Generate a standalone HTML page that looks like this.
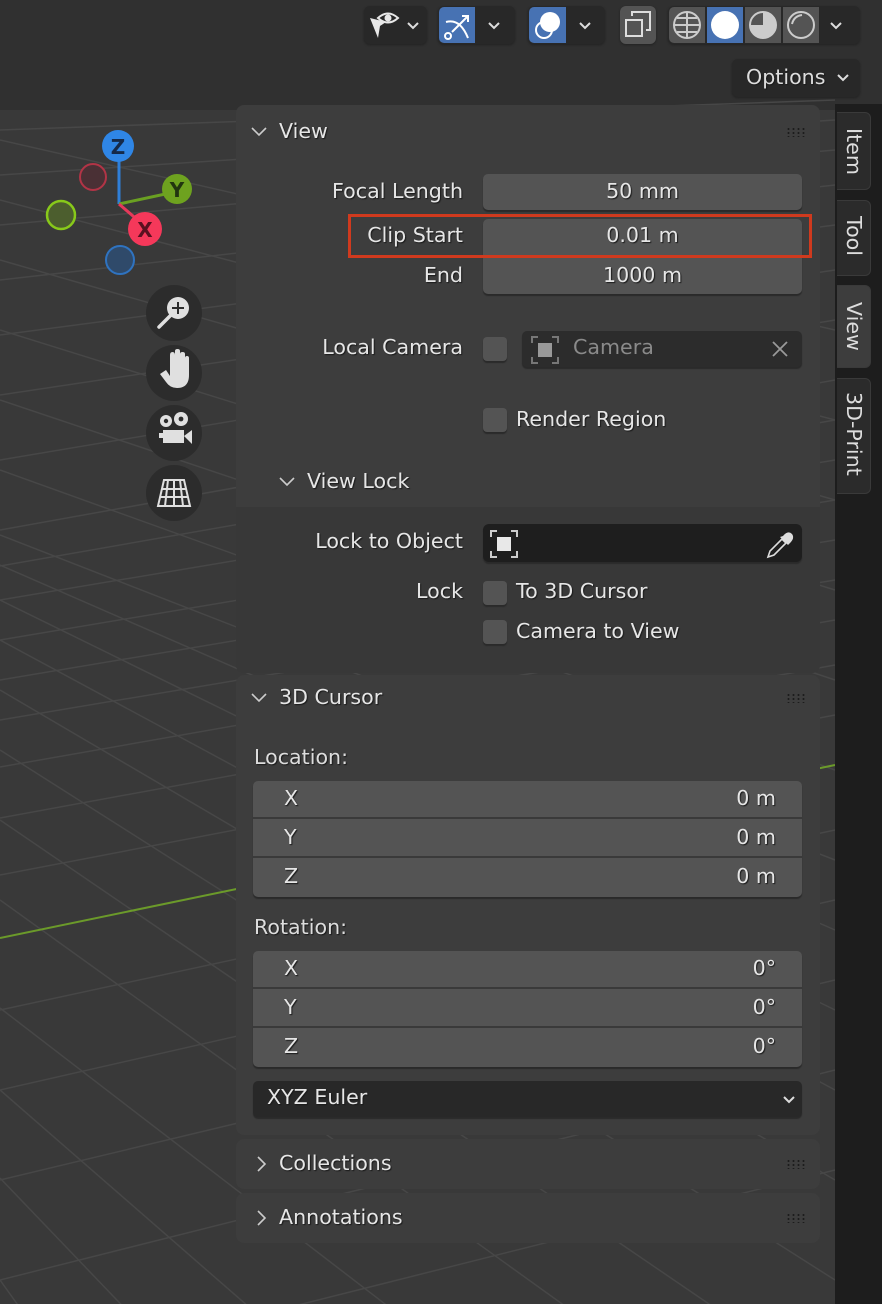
<!DOCTYPE html>
<html><head><meta charset="utf-8"><style>
*{box-sizing:border-box;margin:0;padding:0}
html,body{width:882px;height:1304px;overflow:hidden}
body{background:#393939;font-family:"Liberation Sans","DejaVu Sans",sans-serif;color:#e6e6e6;position:relative}
.a{position:absolute}
.t{text-shadow:1px 1px 1px #1a1a1a;white-space:nowrap;font-family:"DejaVu Sans","Liberation Sans",sans-serif;font-size:20.6px}
.r{text-align:right}
.fld{position:absolute;background:#545454;border-radius:5px;box-shadow:0 2px 1px #2a2a2a}
.cb{position:absolute;width:24px;height:24px;background:#545454;border-radius:4px;box-shadow:0 2px 1px #2a2a2a}
.panel{position:absolute;left:236px;width:584px;background:#3d3d3d;border-radius:8px}
.dots{position:absolute;width:20px;height:10px;background-image:radial-gradient(#1c1c1c 1px,transparent 1.3px);background-size:5px 4px}
.tab{position:absolute;left:837px;width:34px;background:#2b2b2b;border-radius:0 6px 6px 0;border:1px solid #3a3a3a;border-left:none}
.vt{position:absolute;writing-mode:vertical-rl;font-family:"DejaVu Sans",sans-serif;font-size:20.6px;color:#ddd}
.hb{position:absolute;background:#282828;border-radius:6px;box-shadow:0 1px 2px #222}
</style></head><body>
<svg class="a" style="left:0;top:0" width="882" height="1304">
<rect width="882" height="110" fill="#303030"/>
<g stroke="#474747" stroke-width="1.5" fill="none">
<line x1="0" y1="130" x2="835" y2="100"/>
<line x1="0" y1="175" x2="835" y2="120"/>
<line x1="0" y1="225" x2="835" y2="150"/>
<line x1="0" y1="280" x2="835" y2="185"/>
<line x1="0" y1="335" x2="835" y2="225"/>
<line x1="0" y1="395" x2="835" y2="270"/>
<line x1="0" y1="460" x2="835" y2="320"/>
<line x1="0" y1="530" x2="835" y2="380"/>
<line x1="0" y1="566" x2="835" y2="420"/>
<line x1="0" y1="600" x2="835" y2="460"/>
<line x1="0" y1="640" x2="835" y2="500"/>
<line x1="0" y1="680" x2="835" y2="540"/>
<line x1="0" y1="720" x2="835" y2="580"/>
<line x1="0" y1="767" x2="835" y2="620"/>
<line x1="0" y1="818" x2="835" y2="665"/>
<line x1="0" y1="875" x2="835" y2="715"/>
<line x1="0" y1="1010" x2="835" y2="830"/>
<line x1="0" y1="1090" x2="835" y2="900"/>
<line x1="0" y1="1180" x2="835" y2="980"/>
<line x1="0" y1="1280" x2="835" y2="1070"/>
<line x1="0" y1="1380" x2="835" y2="1170"/>
<line x1="0" y1="140" x2="835" y2="330"/>
<line x1="0" y1="200" x2="835" y2="420"/>
<line x1="0" y1="260" x2="835" y2="500"/>
<line x1="0" y1="330" x2="835" y2="590"/>
<line x1="0" y1="400" x2="835" y2="680"/>
<line x1="0" y1="470" x2="835" y2="770"/>
<line x1="0" y1="535" x2="835" y2="860"/>
<line x1="0" y1="565" x2="835" y2="930"/>
<line x1="0" y1="600" x2="835" y2="1010"/>
<line x1="0" y1="640" x2="835" y2="1090"/>
<line x1="0" y1="690" x2="835" y2="1180"/>
<line x1="0" y1="750" x2="835" y2="1280"/>
<line x1="0" y1="820" x2="835" y2="1390"/>
<line x1="0" y1="900" x2="835" y2="1500"/>
<line x1="0" y1="1008" x2="835" y2="1650"/>
<line x1="0" y1="1090" x2="700" y2="1700"/>
<line x1="0" y1="1178" x2="500" y2="1700"/>
<line x1="0" y1="1280" x2="300" y2="1700"/>
</g>
<line x1="0" y1="938" x2="835" y2="765" stroke="#6b9a2a" stroke-width="2"/>
<line x1="119" y1="204" x2="119" y2="160" stroke="#2f7fd8" stroke-width="3"/>
<line x1="119" y1="204" x2="170" y2="193" stroke="#6aa022" stroke-width="3"/>
<line x1="119" y1="204" x2="140" y2="222" stroke="#e6395a" stroke-width="3"/>
<circle cx="93" cy="177" r="13" fill="#4a3035" stroke="#b23446" stroke-width="2"/>
<circle cx="61" cy="215" r="14" fill="#4c5e2e" stroke="#88c91a" stroke-width="2.5"/>
<circle cx="120" cy="260" r="14" fill="#2f4a6a" stroke="#2f73c0" stroke-width="2"/>
<circle cx="118" cy="146" r="16" fill="#2f86e6"/>
<text x="118" y="154" text-anchor="middle" font-family="DejaVu Sans" font-weight="bold" font-size="20" fill="#152a4a">Z</text>
<circle cx="177" cy="189" r="15" fill="#6ea21f"/>
<text x="177" y="197" text-anchor="middle" font-family="DejaVu Sans" font-weight="bold" font-size="20" fill="#223510">Y</text>
<circle cx="145" cy="229" r="17" fill="#f5385a"/>
<text x="145" y="237" text-anchor="middle" font-family="DejaVu Sans" font-weight="bold" font-size="20" fill="#5a1020">X</text>
<g fill="#2c2c2c"><circle cx="174" cy="313" r="28"/><circle cx="174" cy="373" r="28"/><circle cx="174" cy="433" r="28"/><circle cx="174" cy="493" r="28"/></g>
<g fill="#e0e0e0" stroke="#e0e0e0">
<circle cx="178" cy="308" r="11" stroke="none"/><line x1="170" y1="316" x2="159" y2="327" stroke-width="3.5" stroke-linecap="round"/>
<path d="M178 302v12M172 308h12" stroke="#2c2c2c" stroke-width="2" fill="none"/>
<path d="M160 374 L166 370 L170 376 L170 355 Q170 352 172.5 352 Q175 352 175 355 L175 351 Q175 349 177.5 349 Q180 349 180 351 L180 354 Q180 352 182.5 352 Q185 352 185 354 L185 358 Q185 356 187 356 Q189 356 189 358 L189 375 Q189 388 177 388 Q170 388 166 382 Z" stroke="none"/>
<circle cx="166" cy="421" r="6" stroke="none"/><circle cx="181" cy="419" r="7" stroke="none"/>
<circle cx="166" cy="421" r="2.2" fill="#2c2c2c" stroke="none"/><circle cx="181" cy="419" r="2.4" fill="#2c2c2c" stroke="none"/>
<rect x="163" y="430" width="21" height="13" stroke="none"/><rect x="159" y="433" width="5" height="5" stroke="none"/><path d="M184 436 L192 430 L192 444 Z" stroke="none"/>
<path d="M164 480 H184 L190 506 H158 Z M168 480 L165 506 M174 480 V506 M180 480 L183 506 M162 489 H186 M160 497 H188" fill="none" stroke-width="2"/>
</g>
</svg>

<div class="hb" style="left:364px;top:6px;width:63px;height:38px"></div>
<svg class="a" style="left:364px;top:6px" width="63" height="38"><path d="M6 12 L22 16 L16 20 L14 32 Z" fill="#e8e8e8"/><path d="M14 12 Q24 3 34 12 Q24 21 14 12Z" fill="none" stroke="#e8e8e8" stroke-width="2"/><circle cx="24" cy="12" r="3.5" fill="#e8e8e8"/><path d="M44 17 l5 5 l5 -5" stroke="#ddd" stroke-width="2" fill="none"/></svg>
<div class="hb" style="left:438px;top:6px;width:77px;height:38px"></div>
<div class="a" style="left:439px;top:7px;width:36px;height:36px;background:#4772b3;border-radius:5px 0 0 5px"></div>
<svg class="a" style="left:438px;top:6px" width="77" height="38"><path d="M8 16 Q22 12 30 32" stroke="#fff" stroke-width="2" fill="none"/><circle cx="10" cy="30" r="3" stroke="#fff" stroke-width="2" fill="none"/><path d="M14 26 L30 10 M24 10 H30 V16" stroke="#fff" stroke-width="2" fill="none"/><path d="M51 17 l5 5 l5 -5" stroke="#ddd" stroke-width="2" fill="none"/></svg>
<div class="hb" style="left:528px;top:6px;width:77px;height:38px"></div>
<div class="a" style="left:529px;top:7px;width:37px;height:36px;background:#4772b3;border-radius:5px 0 0 5px"></div>
<svg class="a" style="left:528px;top:6px" width="77" height="38"><circle cx="22" cy="16" r="10" fill="#fff"/><circle cx="16" cy="24" r="8" fill="none" stroke="#fff" stroke-width="2"/><path d="M52 17 l5 5 l5 -5" stroke="#ddd" stroke-width="2" fill="none"/></svg>
<div class="hb" style="left:620px;top:6px;width:36px;height:38px;background:#545454"></div>
<svg class="a" style="left:620px;top:6px" width="36" height="38"><rect x="6" y="14" width="16" height="16" fill="none" stroke="#ddd" stroke-width="2"/><path d="M12 10 V6 H30 V24 H26" fill="none" stroke="#ddd" stroke-width="2"/></svg>
<div class="hb" style="left:668px;top:6px;width:192px;height:38px"></div>
<div class="a" style="left:669px;top:7px;width:36px;height:36px;background:#545454;border-radius:5px 0 0 5px"></div>
<div class="a" style="left:707px;top:7px;width:36px;height:36px;background:#4772b3"></div>
<div class="a" style="left:745px;top:7px;width:36px;height:36px;background:#545454"></div>
<div class="a" style="left:783px;top:7px;width:36px;height:36px;background:#545454"></div>
<svg class="a" style="left:668px;top:6px" width="192" height="38"><g fill="none" stroke="#ccc" stroke-width="2"><circle cx="19" cy="19" r="13"/><path d="M6 19H32M19 6V32M9 12H29M9 26H29"/></g><circle cx="57" cy="19" r="14" fill="#fff"/><circle cx="95" cy="19" r="13" fill="none" stroke="#ccc" stroke-width="2"/><path d="M95 6 A13 13 0 0 1 95 32 Z M82 19 H95 V32 A13 13 0 0 1 82 19Z" fill="#ccc"/><circle cx="133" cy="19" r="13" fill="none" stroke="#ccc" stroke-width="2"/><path d="M124 18 Q126 10 134 9" stroke="#ccc" stroke-width="2" fill="none"/><path d="M163 17 l5 5 l5 -5" stroke="#ddd" stroke-width="2" fill="none"/></svg>
<div class="hb" style="left:732px;top:59px;width:128px;height:38px;background:#282828"></div>
<div class="a t" style="left:746px;top:65px;color:#ddd">Options</div>
<svg class="a" style="left:836px;top:72px" width="16" height="12"><path d="M2 3 l5 5 l5 -5" stroke="#ddd" stroke-width="2" fill="none"/></svg>

<div class="a" style="left:835px;top:104px;width:47px;height:1200px;background:#1d1d1d"></div>
<div class="tab" style="top:112px;height:78px"></div><div class="vt" style="left:842px;top:128px">Item</div>
<div class="tab" style="top:200px;height:76px"></div><div class="vt" style="left:842px;top:216px">Tool</div>
<div class="tab" style="top:285px;height:83px;background:#3d3d3d"></div><div class="vt" style="left:842px;top:302px">View</div>
<div class="tab" style="top:378px;height:116px"></div><div class="vt" style="left:842px;top:392px">3D-Print</div>

<div class="panel" style="top:105px;height:568px"></div>
<div class="a" style="left:236px;top:507px;width:584px;height:166px;background:#383838;border-radius:0 0 8px 8px"></div>
<svg class="a" style="left:250px;top:124px" width="20" height="16"><path d="M2 4 l7 7 l7 -7" stroke="#ccc" stroke-width="1.6" fill="none"/></svg>
<div class="a t" style="left:279px;top:119px">View</div>
<div class="dots" style="left:786px;top:127px"></div>

<div class="a t r" style="left:250px;width:213px;top:179px">Focal Length</div>
<div class="fld" style="left:483px;top:174px;width:319px;height:36px"></div>
<div class="a t" style="left:483px;width:319px;top:179px;text-align:center">50 mm</div>
<div class="a t r" style="left:250px;width:213px;top:223px">Clip Start</div>
<div class="fld" style="left:483px;top:219px;width:319px;height:75px"></div>
<div class="a" style="left:483px;top:256px;width:319px;height:2px;background:#3d3d3d"></div>
<div class="a t" style="left:483px;width:319px;top:223px;text-align:center">0.01 m</div>
<div class="a t r" style="left:250px;width:213px;top:263px">End</div>
<div class="a t" style="left:483px;width:319px;top:263px;text-align:center">1000 m</div>
<div class="a" style="left:348px;top:214px;width:464px;height:44px;border:3px solid #d03a1e"></div>

<div class="a t r" style="left:250px;width:213px;top:335px">Local Camera</div>
<div class="cb" style="left:483px;top:337px"></div>
<div class="a" style="left:522px;top:331px;width:280px;height:36px;background:#2c2c2c;border-radius:5px;box-shadow:0 2px 1px #2a2a2a"></div>
<svg class="a" style="left:530px;top:335px" width="30" height="30"><path d="M2 8V2H8M22 2H28V8M28 22V28H22M8 28H2V22" stroke="#777" stroke-width="2" fill="none"/><rect x="8" y="8" width="14" height="14" fill="#999"/></svg>
<div class="a t" style="left:573px;top:335px;color:#8a8a8a;text-shadow:none">Camera</div>
<svg class="a" style="left:770px;top:339px" width="20" height="20"><path d="M3 3L17 17M17 3L3 17" stroke="#999" stroke-width="1.8"/></svg>

<div class="cb" style="left:483px;top:408px"></div>
<div class="a t" style="left:516px;top:407px">Render Region</div>

<svg class="a" style="left:278px;top:474px" width="20" height="16"><path d="M2 4 l7 7 l7 -7" stroke="#ccc" stroke-width="1.6" fill="none"/></svg>
<div class="a t" style="left:307px;top:469px">View Lock</div>
<div class="a t r" style="left:250px;width:213px;top:529px">Lock to Object</div>
<div class="a" style="left:483px;top:524px;width:319px;height:38px;background:#1e1e1e;border-radius:6px;box-shadow:0 2px 1px #2a2a2a"></div>
<svg class="a" style="left:489px;top:529px" width="30" height="30"><path d="M2 8V2H8M22 2H28V8M28 22V28H22M8 28H2V22" stroke="#ccc" stroke-width="2" fill="none"/><rect x="8" y="8" width="14" height="14" fill="#e8e8e8"/></svg>
<svg class="a" style="left:764px;top:529px" width="32" height="30"><path d="M4 28 L6 22 L18 10 L22 14 L10 26 Z" fill="none" stroke="#ddd" stroke-width="1.6"/><path d="M16 8 L24 16 L26 14 Q31 9 28 5 Q24 1 19 7 Z" fill="#ddd"/></svg>
<div class="a t r" style="left:250px;width:213px;top:579px">Lock</div>
<div class="cb" style="left:483px;top:581px"></div>
<div class="a t" style="left:516px;top:579px">To 3D Cursor</div>
<div class="cb" style="left:483px;top:620px"></div>
<div class="a t" style="left:516px;top:619px">Camera to View</div>

<div class="panel" style="top:675px;height:460px"></div>
<svg class="a" style="left:250px;top:690px" width="20" height="16"><path d="M2 4 l7 7 l7 -7" stroke="#ccc" stroke-width="1.6" fill="none"/></svg>
<div class="a t" style="left:279px;top:685px">3D Cursor</div>
<div class="dots" style="left:786px;top:693px"></div>
<div class="a t" style="left:254px;top:745px;color:#ddd">Location:</div>
<div class="fld" style="left:253px;top:781px;width:549px;height:116px"></div>
<div class="a" style="left:253px;top:817px;width:549px;height:2px;background:#3a3a3a"></div>
<div class="a" style="left:253px;top:856px;width:549px;height:2px;background:#3a3a3a"></div>
<div class="a t" style="left:284px;top:786px">X</div><div class="a t r" style="left:600px;width:176px;top:786px">0 m</div>
<div class="a t" style="left:284px;top:825px">Y</div><div class="a t r" style="left:600px;width:176px;top:825px">0 m</div>
<div class="a t" style="left:284px;top:864px">Z</div><div class="a t r" style="left:600px;width:176px;top:864px">0 m</div>
<div class="a t" style="left:254px;top:915px;color:#ddd">Rotation:</div>
<div class="fld" style="left:253px;top:951px;width:549px;height:116px"></div>
<div class="a" style="left:253px;top:987px;width:549px;height:2px;background:#3a3a3a"></div>
<div class="a" style="left:253px;top:1026px;width:549px;height:2px;background:#3a3a3a"></div>
<div class="a t" style="left:284px;top:956px">X</div><div class="a t r" style="left:600px;width:176px;top:956px">0°</div>
<div class="a t" style="left:284px;top:995px">Y</div><div class="a t r" style="left:600px;width:176px;top:995px">0°</div>
<div class="a t" style="left:284px;top:1034px">Z</div><div class="a t r" style="left:600px;width:176px;top:1034px">0°</div>
<div class="a" style="left:253px;top:1081px;width:549px;height:36px;background:#282828;border-radius:5px;box-shadow:0 2px 1px #2a2a2a"></div>
<div class="a t" style="left:267px;top:1085px">XYZ Euler</div>
<svg class="a" style="left:782px;top:1094px" width="16" height="12"><path d="M2 3 l5 5 l5 -5" stroke="#ddd" stroke-width="2" fill="none"/></svg>

<div class="panel" style="top:1139px;height:50px"></div>
<svg class="a" style="left:254px;top:1155px" width="16" height="20"><path d="M4 2 l7 7 l-7 7" stroke="#ccc" stroke-width="1.6" fill="none"/></svg>
<div class="a t" style="left:279px;top:1151px">Collections</div>
<div class="dots" style="left:786px;top:1159px"></div>
<div class="panel" style="top:1193px;height:50px"></div>
<svg class="a" style="left:254px;top:1209px" width="16" height="20"><path d="M4 2 l7 7 l-7 7" stroke="#ccc" stroke-width="1.6" fill="none"/></svg>
<div class="a t" style="left:279px;top:1205px">Annotations</div>
<div class="dots" style="left:786px;top:1213px"></div>
</body></html>
